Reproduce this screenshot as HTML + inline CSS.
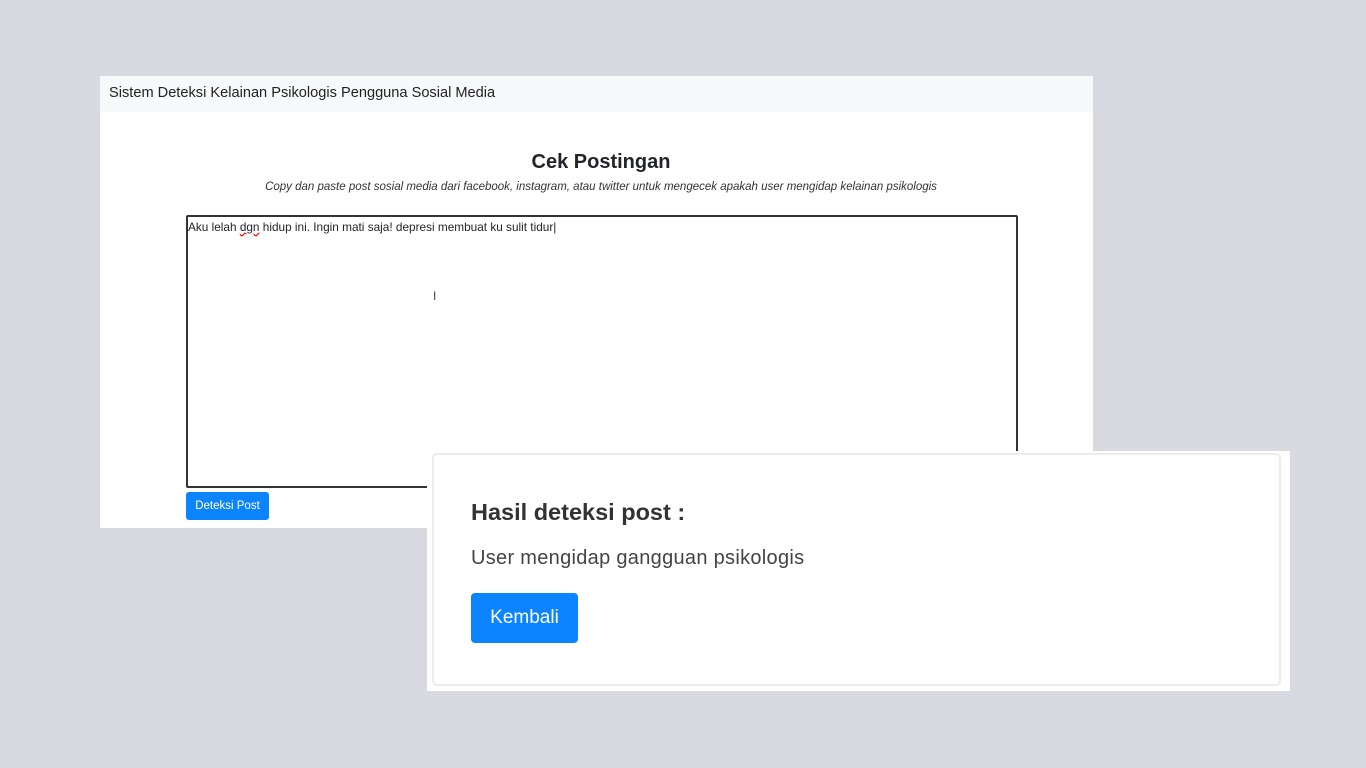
<!DOCTYPE html>
<html><head><meta charset="utf-8"><style>
body{margin:0;width:1366px;height:768px;background:#d9d9e1;position:relative;overflow:hidden;font-family:"Liberation Sans","DejaVu Sans",sans-serif;color:#212529}
.abs{position:absolute}
#main{left:100px;top:76px;width:993px;height:452px;background:#fff}
#nav{left:0;top:0;width:993px;height:36px;background:#f8f9fa}
#nav span{position:absolute;left:9px;top:9px;font-size:14.6px;color:#222}
#ta{left:86px;top:139px;width:828px;height:269px;border:2px solid #333;border-radius:2px}
#res{left:427px;top:451px;width:863px;height:240px;background:#fff}
#card{left:5px;top:2px;width:845px;height:229px;border:2px solid #ececec;border-radius:5px}
.btn{background:#0d84ff;color:#fff;border-radius:3px;text-align:center}
</style></head><body>
<div id="main" class="abs">
 <div id="nav" class="abs"><span>Sistem Deteksi Kelainan Psikologis Pengguna Sosial Media</span></div>
 <div class="abs" style="left:0;width:1002px;top:75px;text-align:center;font-size:20px;font-weight:bold">Cek Postingan</div>
 <div class="abs" style="left:0;width:1002px;top:105px;text-align:center;font-size:11.5px;font-style:italic;color:#333">Copy dan paste post sosial media dari facebook, instagram, atau twitter untuk mengecek apakah user mengidap kelainan psikologis</div>
 <div id="ta" class="abs"><div style="position:absolute;left:0;top:3px;font-size:11.8px">Aku lelah <span style="text-decoration:underline wavy red">dgn</span> hidup ini. Ingin mati saja! depresi membuat ku sulit tidur|</div>
 <div style="position:absolute;left:245px;top:72px;font-size:12px;color:#444">I</div></div>
 <div class="abs btn" style="left:86px;top:416px;width:83px;height:28px;line-height:28px;font-size:11.5px">Deteksi Post</div>
</div>
<div id="res" class="abs"><div id="card" class="abs">
 <div class="abs" style="left:37px;top:44px;font-size:23.5px;font-weight:bold;color:#333">Hasil deteksi post :</div>
 <div class="abs" style="left:37px;top:92px;font-size:20px;color:#444;letter-spacing:0.3px">User mengidap gangguan psikologis</div>
 <div class="abs btn" style="left:37px;top:138px;width:107px;height:50px;line-height:50px;font-size:19px;border-radius:4px">Kembali</div>
</div></div>
</body></html>
